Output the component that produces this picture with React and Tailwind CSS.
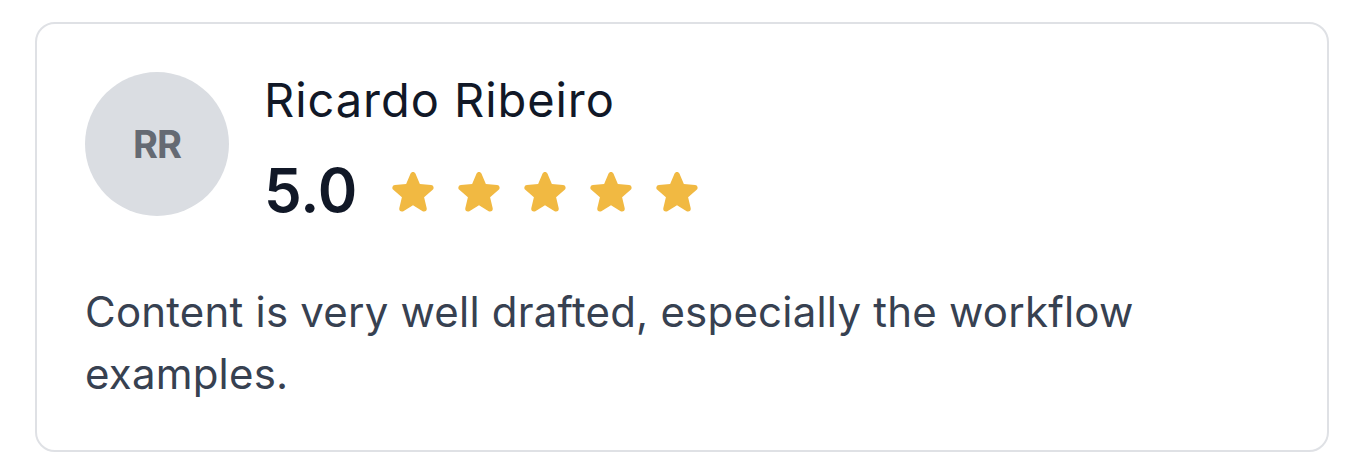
import React from 'react';

function Star() {
  return (
    <svg viewBox="0 0 24 24" className="w-[50px] h-[50px]" fill="#f1b942">
      <path d="M10.788 3.21c.448-1.077 1.976-1.077 2.424 0l2.082 5.006 5.404.434c1.164.093 1.636 1.545.749 2.305l-4.117 3.527 1.257 5.273c.271 1.136-.964 2.033-1.96 1.425L12 18.354 7.373 21.18c-.996.608-2.231-.29-1.96-1.425l1.257-5.273-4.117-3.527c-.887-.76-.415-2.212.749-2.305l5.404-.434 2.082-5.005Z" />
    </svg>
  );
}

export default function App() {
  return (
    <div className="w-[1351px] h-[467px] bg-white pl-[35px] pt-[22px]" style={{ fontFamily: 'Inter, "Noto Sans", sans-serif' }}>
      <div className="w-[1294px] h-[430px] rounded-[20px] border-2 border-[#dfe1e5] px-12 pt-12">
        {/* Header */}
        <div className="flex items-start gap-[35px]">
          <div className="w-[144px] h-[144px] rounded-full bg-[#dadde2] flex items-center justify-center shrink-0">
            <span className="text-[38px] font-bold text-[#656a73] tracking-tight">RR</span>
          </div>
          <div className="flex flex-col">
            <div className="text-[47px] font-normal leading-[56px] text-[#111827] tracking-[0.02em]">Ricardo Ribeiro</div>
            <div className="flex items-center gap-[31px] mt-[34px]">
              <span className="text-[60px] font-semibold leading-[56px] text-[#111827]">5.0</span>
              <div className="flex items-center gap-[16px] mt-[4px]">
                <Star />
                <Star />
                <Star />
                <Star />
                <Star />
              </div>
            </div>
          </div>
        </div>

        {/* Review */}
        <p className="mt-[63px] text-[42px] leading-[62px] text-[#374151] tracking-[0.005em] max-w-[1150px]">
          Content is very well drafted, especially the workflow examples.
        </p>
      </div>
    </div>
  );
}
